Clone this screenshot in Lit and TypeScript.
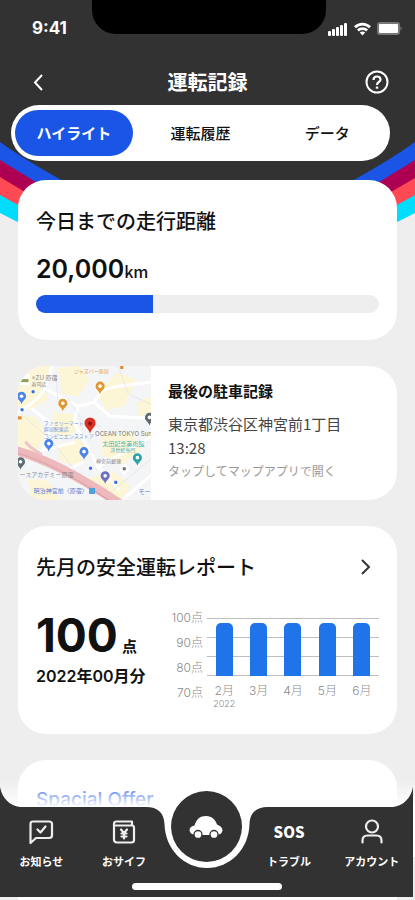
import { LitElement, html, svg, css } from "lit";
import { customElement, property, state } from "lit/decorators.js";
import { classMap } from "lit/directives/class-map.js";

const TABS = ["ハイライト", "運転履歴", "データ"];

@customElement("status-bar")
class StatusBar extends LitElement {
  static styles = css`
    :host { display: flex; justify-content: space-between; height: 58px; position: relative; color: #fff; }
    .notch { position: absolute; left: 50%; top: 0; width: 234px; height: 34px; margin-left: -116px;
      background: #000; border-radius: 0 0 24px 24px; }
    .time { font: 700 17px/24px Inter, sans-serif; margin: 16px 0 0 32px; }
    .signals { display: flex; gap: 6px; margin: 22px 12px 0 0; }
    svg { display: block; fill: #fff; }
  `;
  render() {
    return html`
      <div class="notch"></div>
      <div class="time">9:41</div>
      <div class="signals">
        <svg width="20" height="14" viewBox="0 0 20 14">
          <rect x="0" y="9" width="3" height="5" rx="1" /><rect x="4" y="7" width="3" height="7" rx="1" />
          <rect x="8" y="5" width="3" height="9" rx="1" /><rect x="12" y="3" width="3" height="11" rx="1" />
          <rect x="16" y="1" width="3" height="13" rx="1" />
        </svg>
        <svg width="17" height="14" viewBox="0 0 17 14">
          <g fill="none" stroke="#fff" stroke-width="2.8">
            <path d="M1 5.2C5.2 1 11.8 1 16 5.2" /><path d="M3.9 8.5C6.5 6 10.5 6 13.1 8.5" />
          </g>
          <path d="M5.8 10.6C7.3 9.2 9.7 9.2 11.2 10.6L8.5 13.4Z" />
        </svg>
        <svg width="26" height="14" viewBox="0 0 26 14">
          <rect x="0" y="0" width="23" height="13" rx="3" fill="#777" />
          <rect x="2" y="2" width="19" height="9" rx="1" />
          <path d="M23.5 4.5C25.2 5 25.2 8 23.5 8.5Z" fill="#777" />
        </svg>
      </div>
    `;
  }
}

@customElement("parking-map")
class ParkingMap extends LitElement {
  static styles = css`
    :host { display: block; width: 133px; height: 134px; overflow: hidden; }
    svg { display: block; width: 100%; height: 100%; }
    text { font-family: Inter, "Noto Sans CJK JP", sans-serif; font-size: 5px; fill: #85888e; }
    .shop { fill: #6d95e0; }
    .museum { fill: #4fb3b5; }
    .food { fill: #e0a052; }
    .area { font-size: 6px; }
    .spot { font-size: 6px; fill: #777; }
    .station { font-size: 6px; fill: #5a7fd8; }
  `;
  private pin(x: number, y: number, color: string, dot = "#fff") {
    return svg`<path fill=${color} d="M${x} ${y + 7}C${x - 1} ${y + 3} ${x - 4.5} ${y + 2.5} ${x - 4.5} ${y - 1}A4.5 4.5 0 0 1 ${x + 4.5} ${y - 1}C${x + 4.5} ${y + 2.5} ${x + 1} ${y + 3} ${x} ${y + 7}Z" />
      <circle cx=${x} cy=${y - 1} r="1.8" fill=${dot} />`;
  }
  render() {
    return html`
      <svg viewBox="0 0 133 133" preserveAspectRatio="xMidYMid slice" role="img" aria-label="駐車位置の地図">
        <rect width="133" height="133" fill="#f4f5f7" />
        <g fill="#fdf6d6">
          <path d="M0 0H34L26 14 30 34 12 44 0 40Z" />
          <path d="M40 2L62 0 72 14 60 30 44 28Z" />
          <path d="M78 26L100 6 118 14 106 40 88 44Z" />
          <path d="M0 48L18 50 28 66 18 88 0 78Z" />
          <path d="M36 46L56 48 60 62 48 72 34 64Z" />
          <path d="M40 78L62 72 72 86 58 100 42 94Z" />
          <path d="M84 68L112 66 124 82 104 98 84 88Z" />
          <path d="M70 112L94 104 112 118 104 133 84 128Z" />
          <path d="M10 112L30 114 44 133H14Z" />
          <path d="M118 36L133 30V46L120 50Z" />
        </g>
        <g fill="none" stroke="#fff" stroke-width="3" stroke-linecap="round" stroke-linejoin="round">
          <path d="M0 46C22 34 30 24 34 0M30 24L60 40 76 36 92 50 133 52M76 36L84 24 100 20 133 16" />
          <path d="M14 42L34 58 24 84M60 40L56 56 80 100 100 122M80 100L133 70M56 76L24 84" />
          <path d="M104 133L133 108M64 96L44 106" />
        </g>
        <g fill="none" stroke="#dfe2e8" stroke-width="0.7">
          <path d="M4 48L34 74 64 112 90 122M50 32L64 54 82 60M92 126L133 92M38 6L40 34M100 0L110 28 133 38" />
        </g>
        <path d="M-2 84C28 92 62 110 102 137" fill="none" stroke="#edb9bd" stroke-width="9" />
        <path d="M-2 86C28 94 60 112 96 137" fill="none" stroke="#dc9ea4" stroke-width="1" />
        <path d="M8 75C12 82 16 82 24 88" fill="none" stroke="#edc4c7" stroke-width="3" />
        <rect x="2" y="8" width="10" height="11" fill="#fff" />
        <rect x="3" y="13" width="8" height="3" fill="#8fa052" />
        <text class="area" x="14" y="14">×ZU 原宿</text>
        <text x="14" y="20">寿司店</text>
        <text class="food" x="56" y="7">ジャズバー原宿</text>
        <text class="shop" x="26" y="59">ファミリーマート</text>
        <text class="shop" x="26" y="65">原宿駅東店</text>
        <text class="shop" x="26" y="71">コンビニエンスストア</text>
        <text class="museum area" x="84" y="79">太田記念美術館</text>
        <text class="museum" x="92" y="85">浮世絵専門</text>
        <text x="78" y="96">神宮前郵便</text>
        <text class="area" x="2" y="110">ースアカデミー原宿</text>
        <text class="station" x="16" y="126">明治神宮前〈原宿〉</text>
        <text class="station" x="120" y="127">モー</text>
        <rect x="71" y="121" width="6" height="6" fill="#4aa3dd" />
        <g fill="#2f6df0">
          <rect x="14" y="24" width="3" height="3" rx="1" /><rect x="3" y="42" width="3" height="3" rx="1" />
          <rect x="71" y="100" width="3" height="3" rx="1" /><rect x="96" y="114" width="3" height="3" rx="1" />
        </g>
        <rect x="0" y="50" width="4" height="3" fill="#e0862c" />
        <rect x="102" y="0" width="3" height="3" fill="#e0862c" />
        ${this.pin(4, 31, "#4e84ea")} ${this.pin(82, 21, "#e2962f")} ${this.pin(45, 38, "#e2962f")}
        ${this.pin(131, 52, "#5d6b73")} ${this.pin(31, 78, "#4e84ea")} ${this.pin(66, 86, "#4e84ea")}
        ${this.pin(119, 92, "#2ea3a5")} ${this.pin(87, 110, "#6c70c4")} ${this.pin(106, 103, "#fff", "#777")}
        ${this.pin(3, 96, "#5d6b73")}
        <text class="spot" x="77" y="69">OCEAN TOKYO Sun</text>
        <path fill="#d93025" d="M72 67C71 62 66.500 61 66.500 56.500A5.500 5.500 0 0 1 77.500 56.500C77.500 61 73 62 72 67Z" />
        <circle cx="72" cy="57" r="2" fill="#8f1410" />
      </svg>
    `;
  }
}

@customElement("score-chart")
class ScoreChart extends LitElement {
  @property({ attribute: false }) months: { label: string; year?: string; score: number }[] = [];
  static styles = css`
    :host { display: grid; grid-template-columns: 36px 1fr; column-gap: 4px; color: #8a8a8a;
      font: 300 12px/25px Inter, "Noto Sans CJK JP", sans-serif; }
    .scale { text-align: right; }
    .plot { padding-top: 13px; }
    .area { display: grid; height: 58px; }
    .lines, .bars { grid-area: 1 / 1; display: flex; }
    .lines { flex-direction: column; justify-content: space-between; }
    .line { height: 1px; background: #bdbdbd; }
    .bars { align-items: flex-end; justify-content: space-around; }
    .bar { width: 17px; background: #1f74ea; border-radius: 5px 5px 0 0; }
    .labels { display: flex; padding-top: 6px; }
    .label { flex: 1; text-align: center; line-height: 18px; }
    .year { font-size: 9px; line-height: 8px; }
  `;
  render() {
    return html`
      <div class="scale">
        <div>100点</div><div>90点</div><div>80点</div><div>70点</div>
      </div>
      <div class="plot">
        <div class="area">
          <div class="lines">
            <div class="line"></div><div class="line"></div><div class="line"></div><div class="line"></div>
          </div>
          <div class="bars">
            ${this.months.map((m) => html`<div class="bar" style="height:${m.score}%"></div>`)}
          </div>
        </div>
        <div class="labels">
          ${this.months.map((m) => html`<div class="label">${m.label}<div class="year">${m.year ?? ""}</div></div>`)}
        </div>
      </div>
    `;
  }
}

@customElement("tab-bar")
class TabBar extends LitElement {
  static styles = css`
    :host { display: block; padding: 0 2px 3px 0; }
    .shell { display: grid; grid-template-rows: 20px 90px; }
    .shape { grid-area: 1 / 1 / 3 / 2; display: flex; align-items: flex-end; }
    .side { flex: 1; display: flex; flex-direction: column; align-items: flex-start; }
    .side.right { align-items: flex-end; }
    .flare { display: block; fill: #323232; }
    .fill { width: 100%; height: 90px; background: #323232; }
    .dip { display: block; fill: #323232; }
    nav { grid-area: 2 / 1; display: grid; grid-template-columns: repeat(5, 1fr); }
    .item { display: flex; flex-direction: column; align-items: center; gap: 6px; padding-top: 11px; color: #fff;
      text-decoration: none; white-space: nowrap; font: 700 11px/18px "Noto Sans CJK JP", sans-serif; }
    .item svg { display: block; fill: none; stroke: #eee; stroke-width: 2.2; stroke-linejoin: round; stroke-linecap: round; }
    .sos { font: 900 15px/28px "Noto Sans CJK JP", sans-serif; height: 28px; }
    .drive { justify-self: center; width: 71px; height: 71px; margin-top: -16px; padding: 0; border: 0;
      border-radius: 50%; background: #323232; display: grid; place-items: center; }
    .home { grid-area: 2 / 1; place-self: end center; width: 150px; height: 7px; margin-bottom: 7px;
      border-radius: 4px; background: #fff; }
  `;
  render() {
    return html`
      <div class="shell">
        <div class="shape">
          <div class="side">
            <svg class="flare" width="20" height="20"><path d="M0 0C2 11 10 19 20 20H0Z" /></svg>
            <div class="fill"></div>
          </div>
          <svg class="dip" width="122" height="90" viewBox="0 0 122 90">
            <path d="M0 0C12 0 18 6 18.500 17C19 42 38 61 61 61S103 42 103.500 17C104 6 110 0 122 0V90H0Z" />
          </svg>
          <div class="side right">
            <svg class="flare" width="20" height="20"><path d="M20 0C18 11 10 19 0 20H20Z" /></svg>
            <div class="fill"></div>
          </div>
        </div>
        <nav>
          <a class="item" href="#news">
            <svg width="28" height="28" viewBox="0 0 28 28">
              <path d="M3.500 25V6Q3.500 3.500 6 3.500H22Q25 3.500 25 6V17.500Q25 20 22 20H9Z" />
              <path d="M10.500 11.500L13.500 14.500 18.500 8.500" />
            </svg>お知らせ</a>
          <a class="item" href="#wallet">
            <svg width="28" height="28" viewBox="0 0 28 28">
              <path d="M22 7V3.500H6.500Q4 3.500 4 6V21.500Q4 24.500 7 24.500H21.500Q24 24.500 24 22V9.500Q24 7.500 22 7.500H6" />
              <path d="M11 11.500L14 15 17 11.500M14 15.500V20.500M11.500 15.500H16.500M11.500 18.500H16.500" stroke-width="2.200" />
            </svg>おサイフ</a>
          <button class="drive" aria-label="運転">
            <svg width="36" height="24" viewBox="0 0 36 24">
              <path fill="#fff" d="M7 20Q2 19 1.500 15.500Q1.500 11.500 6.500 10.500C8.500 4 12 1 18 1C24 1 27.500 5 29 9.500Q34.500 11.500 34.500 15.500Q34 19 29.500 20Z" />
              <circle cx="10" cy="19.500" r="4" fill="#fff" stroke="#323232" stroke-width="1.300" />
              <circle cx="26" cy="19.500" r="4" fill="#fff" stroke="#323232" stroke-width="1.300" />
            </svg>
          </button>
          <a class="item" href="#trouble"><span class="sos">SOS</span>トラブル</a>
          <a class="item" href="#account">
            <svg width="28" height="28" viewBox="0 0 28 28">
              <circle cx="14" cy="8.500" r="6" />
              <path d="M4.500 24.500V22.500Q4.500 17.500 9.500 17.500H18.500Q23.500 17.500 23.500 22.500V24.500" />
            </svg>アカウント</a>
        </nav>
        <div class="home"></div>
      </div>
    `;
  }
}

@customElement("app-root")
class AppRoot extends LitElement {
  @state() private tab = 0;
  private distance = { text: "20,000", percent: 34 };
  private months = [
    { label: "2月", year: "2022", score: 92 },
    { label: "3月", score: 92 },
    { label: "4月", score: 92 },
    { label: "5月", score: 92 },
    { label: "6月", score: 92 },
  ];

  static styles = css`
    :host { display: grid; grid-template: minmax(0, 1fr) / minmax(0, 1fr); height: 100vh; overflow: hidden;
      position: relative; background: #eee; color: #111; font-family: Inter, "Noto Sans CJK JP", sans-serif; }
    .backdrop { position: absolute; top: 0; left: 0; width: 100%; height: 320px; }
    .screen { grid-area: 1 / 1; position: relative; overflow: hidden; }
    .titlebar { display: grid; grid-template-columns: 24px 1fr 24px; align-items: center; height: 47px; padding: 0 26px;
      color: #fff; text-align: center; }
    h1, h2, p { margin: 0; }
    h1 { font: 700 20px/28px "Noto Sans CJK JP", sans-serif; }
    .icon { border: 0; padding: 0; background: none; display: block; width: 24px; height: 24px; }
    .icon svg { display: block; }
    .tabs { display: grid; grid-template-columns: repeat(3, 1fr); gap: 9px; margin: 0 25px 19px 11px; padding: 5px 4px;
      border-radius: 28px; background: #fff; }
    .tab { height: 46px; border: 0; border-radius: 23px; padding: 0; background: none; color: #111;
      font: 500 15px/24px "Noto Sans CJK JP", sans-serif; }
    .tab.on { background: #1b55e5; color: #fff; font-weight: 700; }
    .cards { display: grid; gap: 26px; padding: 0 18px; }
    .card { background: #fff; border-radius: 28px; padding: 26px 18px; }
    h2 { font: 500 20px/30px "Noto Sans CJK JP", sans-serif; }
    .distance { font-size: 25px; font-weight: 600; line-height: 30px; padding-top: 18px; }
    .km { font: 500 16px/20px "Noto Sans CJK JP", sans-serif; }
    .track { height: 18px; margin: 11px 0 1px; border-radius: 9px; background: #eee; overflow: hidden; }
    .done { height: 100%; background: #1b55e5; }
    .parking { display: flex; padding: 0; overflow: hidden; text-decoration: none; color: #444;
      font: 400 15px/24px "Noto Sans CJK JP", sans-serif; }
    .where { padding: 13px 0 0 17px; }
    .where strong { display: block; color: #111; padding-bottom: 9px; }
    .hint { font-size: 12px; line-height: 22px; color: #999; }
    .head { display: flex; justify-content: space-between; align-items: center; }
    .body { display: flex; justify-content: space-between; padding-top: 23px; }
    .score { padding-top: 7px; }
    .points { font-size: 46px; font-weight: 700; line-height: 46px; }
    .unit { font: 700 15px/20px "Noto Sans CJK JP", sans-serif; margin-left: 4px; }
    .month { font-size: 16px; font-weight: 600; line-height: 24px; padding-top: 6px; }
    score-chart { flex: 0 0 212px; }
    .offer { height: 160px; }
    .offer h2 { font: 500 19px/28px Inter, sans-serif; color: #1b55e5; }
    .dock { grid-area: 1 / 1; align-self: end; position: relative; }
    .fade { position: absolute; left: 0; right: 0; top: -6px; height: 76px;
      background: linear-gradient(rgba(255, 255, 255, 0), #fff 26px); }
    tab-bar { position: relative; }
  `;

  render() {
    return html`
      <svg class="backdrop" viewBox="0 0 415 320" preserveAspectRatio="none">
        <path fill="#00dcfb" d="M0 0H415V213L350 246H65L0 213Z" />
        <path fill="#ff4a55" d="M0 0H415V195L350 231H65L0 195Z" />
        <path fill="#ae0052" d="M0 0H415V178L350 216H65L0 177Z" />
        <path fill="#1b55e5" d="M0 0H415V160L350 200H65L0 160Z" />
        <path fill="#323232" d="M0 0H415V142Q390 160 350 182H65Q25 160 0 142Z" />
      </svg>
      <div class="screen">
        <status-bar></status-bar>
        <header class="titlebar">
          <button class="icon" aria-label="戻る">
            <svg width="24" height="24"><path d="M16 5L9 12.500 16 20" fill="none" stroke="#fff" stroke-width="2" /></svg>
          </button>
          <h1>運転記録</h1>
          <button class="icon" aria-label="ヘルプ">
            <svg width="24" height="24" fill="none" stroke="#fff" stroke-width="2">
              <circle cx="12" cy="12" r="10.500" />
              <path d="M8.500 10Q8.500 6.500 12 6.500T15.500 9.700C15.500 12 12 12 12 15" stroke-width="2.200" />
              <path d="M12 16.500V18.700" stroke-width="2.400" />
            </svg>
          </button>
        </header>
        <div class="tabs" role="tablist">
          ${TABS.map((t, i) => html`<button role="tab" aria-selected=${i === this.tab}
            class=${classMap({ tab: true, on: i === this.tab })} @click=${() => (this.tab = i)}>${t}</button>`)}
        </div>
        <main class="cards">
          <section class="card">
            <h2>今日までの走行距離</h2>
            <p class="distance">${this.distance.text}<span class="km">km</span></p>
            <div class="track"><div class="done" style="width:${this.distance.percent}%"></div></div>
          </section>
          <a class="card parking" href="#map">
            <parking-map></parking-map>
            <div class="where">
              <strong>最後の駐車記録</strong>
              <div>東京都渋谷区神宮前1丁目</div>
              <div>13:28</div>
              <div class="hint">タップしてマップアプリで開く</div>
            </div>
          </a>
          <section class="card">
            <div class="head">
              <h2>先月の安全運転レポート</h2>
              <button class="icon" aria-label="レポートを開く">
                <svg width="24" height="24"><path d="M7 5L14 12 7 19" fill="none" stroke="#333" stroke-width="2" /></svg>
              </button>
            </div>
            <div class="body">
              <div class="score">
                <p class="points">100<span class="unit">点</span></p>
                <p class="month">2022年00月分</p>
              </div>
              <score-chart .months=${this.months}></score-chart>
            </div>
          </section>
          <section class="card offer"><h2>Spacial Offer</h2></section>
        </main>
      </div>
      <div class="dock">
        <div class="fade"></div>
        <tab-bar></tab-bar>
      </div>
    `;
  }
}
